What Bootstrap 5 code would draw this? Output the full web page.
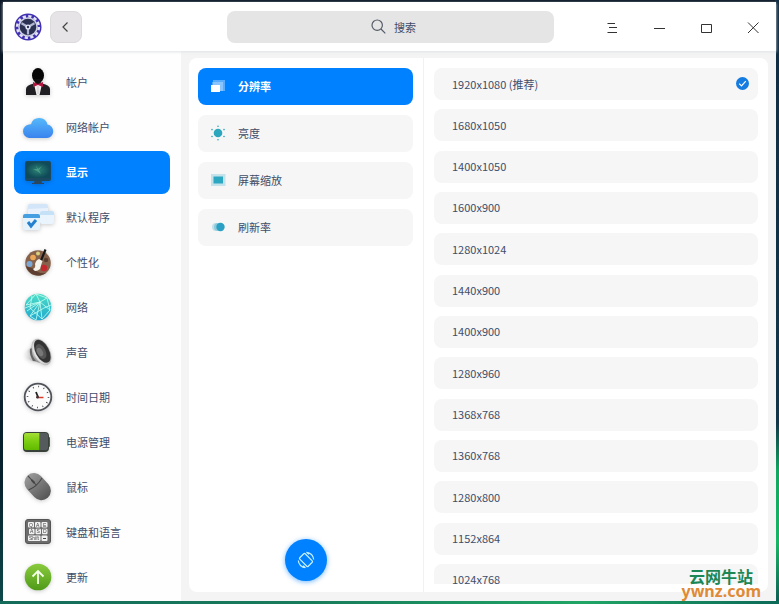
<!DOCTYPE html>
<html lang="zh-CN">
<head>
<meta charset="utf-8">
<meta name="viewport" content="width=device-width, initial-scale=1">
<title>控制中心</title>
<link rel="stylesheet" href="https://cdn.jsdelivr.net/npm/bootstrap@5.3.0/dist/css/bootstrap.min.css">
<style>
body{font-family:"Noto Sans CJK SC",sans-serif;font-size:11px;line-height:16px;color:#414d68;
background:linear-gradient(90deg,#146b5a,#187c5b 40%,#20a565 75%,#0c6a58) bottom/100% 3px no-repeat,
linear-gradient(180deg,#102c42,#12354a 70%,#10a860 78%,#18b565 90%,#0d5a55) right/4px 100% no-repeat,
linear-gradient(180deg,#0a1626,#08222f 80%,#0d4a4c);}
button{font:inherit;color:inherit;border:0;background:none;padding:0}
svg{flex:none;display:block}
.desktop{padding:2px 3px 3px}
.window{background:#f4f4f5}
.titlebar{height:49px;background:#fff;padding:0 11px;box-shadow:0 1px 3px #dfe3e4;position:relative}
.tool{width:32px;height:32px;border-radius:8px;background:#e6e4e6;border:1px solid #dcdadc}
.search{flex:0 1 327px;height:32px;border-radius:8px;background:#e6e5e6;margin-left:145px;padding-left:8px}
.search input{width:24px;border:0;background:none;padding:0;color:#414d68;outline:0}
.search input::placeholder{color:#414d68;opacity:1}
.winctl{gap:31px;margin-left:auto;padding-right:4px}
.side{width:178px;background:#fefefe;padding:10px 11px 2px;gap:2px}
.side button{height:43px;border-radius:8px;padding:0 8px 1px;gap:12px;text-align:left}
.side .active,.menu .active{background:#0081ff;color:#fff;font-weight:700}
.side svg{filter:drop-shadow(0 1px 2px #0003)}
.panel{margin:7px 8px 9px 8px;border-radius:8px;background:#fff}
.middle{width:235px;border-right:1px solid #f1f1f2;padding:10px 10px 11px 9px}
.menu{gap:10px}
.menu button{height:37px;border-radius:8px;background:#f6f6f6;padding:0 12px 1px;gap:12px;text-align:left}
.rotate{width:42px;height:42px;background:#0081ff;box-shadow:0 1px 5px #0081ff90}
.modes{padding:10px 10px 8px;overflow:hidden}
.clip{overflow:hidden;position:relative}
/* the list runs past the lower edge of its viewport */
.modelist{position:absolute;inset:0 0 -12px}
.modelist button{height:32px;border-radius:8px;background:#f6f6f6;padding:0 9px 1px 18px;text-align:left}
.brand{position:absolute;right:18px;bottom:6px;font-weight:700;pointer-events:none}
.brand .cn{font-size:16px;line-height:16px;color:#1c8755;padding-right:8px}
.brand .site{font:700 16px/14px "Noto Sans",sans-serif;color:#e08a35}
</style>
<script src="https://cdn.jsdelivr.net/npm/bootstrap@5.3.0/dist/js/bootstrap.bundle.min.js"></script>
</head>
<body>
<div class="desktop vh-100">
<div class="window h-100 d-flex flex-column">
<header class="titlebar d-flex align-items-center">
  <svg width="28" height="28" viewBox="0 0 28 28"><circle cx="14" cy="14" r="13.5" fill="#4031b0"/><circle cx="14" cy="14" r="10.8" fill="none" stroke="#e3e3f5" stroke-width="2.600" stroke-dasharray="3.2 2.45"/><circle cx="14" cy="14" r="9.8" fill="#cfd0e5"/><circle cx="14" cy="14" r="8.300" fill="#2b3152"/><path d="M14 14V21.500M14 14L7.500 10.200M14 14L20.500 10.200" stroke="#b3b7d6" stroke-width="2.200"/><circle cx="14" cy="14" r="2.600" fill="#e7e9f8"/><circle cx="14" cy="14" r="1.200" fill="#343a60"/></svg>
  <button class="tool ms-2 d-flex align-items-center justify-content-center" aria-label="返回"><svg width="12" height="12" viewBox="0 0 12 12" fill="none" stroke="#444" stroke-width="1.200"><path d="M7.500 1.500L3 6L7.500 10.500"/></svg></button>
  <label class="search d-flex align-items-center justify-content-center gap-2"><svg width="15" height="15" viewBox="0 0 15 15" fill="none" stroke="#555c68" stroke-width="1.200"><circle cx="6.200" cy="6.200" r="5.200"/><path d="M10 10L14.300 14.300"/></svg><input type="text" placeholder="搜索" aria-label="搜索"></label>
  <div class="winctl d-flex">
    <button aria-label="菜单"><svg width="16" height="16" viewBox="0 0 16 16" stroke="#333"><path d="M3.500 4.500H11M5 8.500H13M3.500 13.500H13"/></svg></button>
    <button aria-label="最小化"><svg width="16" height="16" viewBox="0 0 16 16" stroke="#333"><path d="M3 9.500H14"/></svg></button>
    <button aria-label="最大化"><svg width="16" height="16" viewBox="0 0 16 16" stroke="#333" fill="none"><path d="M3.500 5.500H13.500V13.500H3.500Z"/></svg></button>
    <button aria-label="关闭"><svg width="16" height="16" viewBox="0 0 16 16" stroke="#333"><path d="M3 3.500L13.500 14M13.500 3.500L3 14"/></svg></button>
  </div>
</header>
<div class="d-flex flex-grow-1">
<nav class="side d-flex flex-column flex-shrink-0">
  <button class="d-flex align-items-center"><svg width="32" height="32" viewBox="0 0 32 32"><path d="M4 29V23Q4 19 12 17.500H20Q28 19 28 23V29Z" fill="#202024"/><path d="M12 18L14.500 29H17.500L20 18Z" fill="#f4eef0"/><path d="M15 20H17L17.500 28H14.500Z" fill="#ddd"/><ellipse cx="16" cy="9.500" rx="6" ry="7.500" fill="#070707"/><path d="M12 13H20L18 18.500H14Z" fill="#111"/><path d="M11 16L16 18L21 16V21L16 19L11 21Z" fill="#b01640"/></svg>帐户</button>
  <button class="d-flex align-items-center"><svg width="32" height="32" viewBox="0 0 32 32"><defs><linearGradient id="cl" x2="0" y2="1"><stop stop-color="#55b9fb"/><stop offset="1" stop-color="#3a83ee"/></linearGradient></defs><path d="M7 27A6.800 6.800 0 0 1 7 13.500Q8 13 9 13.200A8.500 8.500 0 0 1 25.500 13.500A6.800 6.800 0 0 1 25 27Z" fill="url(#cl)"/></svg>网络帐户</button>
  <button class="active d-flex align-items-center"><svg width="32" height="32" viewBox="0 0 32 32"><defs><radialGradient id="mo"><stop stop-color="#2d8377"/><stop offset="1" stop-color="#0f4a58"/></radialGradient></defs><path d="M13 24H19L20 27H12Z" fill="#28495c"/><path d="M10 27H22V28H10Z" fill="#2c4460"/><rect x="3" y="5" width="26" height="20" rx="2" fill="#1c4960"/><rect x="4" y="6" width="24" height="16" fill="url(#mo)"/><path d="M14 9L16 13L20 10L17 14L19 18L15 15L11 13L15 13Z" fill="#55a889" opacity=".7"/></svg>显示</button>
  <button class="d-flex align-items-center"><svg width="32" height="32" viewBox="0 0 32 32"><rect x="6" y="3" width="20" height="14" rx="2" fill="#e9f2fc"/><path d="M6 8V5Q6 3 8 3H24Q26 3 26 5V7Z" fill="#d3e5f9"/><rect x="18" y="10" width="14" height="13" rx="2" fill="#e9f4fd"/><path d="M18 14V12Q18 10 20 10H30Q32 10 32 12V14Z" fill="#c5e1f8"/><rect x="1" y="13" width="17" height="16" rx="2" fill="#e6f3fd"/><path d="M1 17V15Q1 13 3 13H16Q18 13 18 15V17Z" fill="#469fe0"/><path d="M6 21L9 25L14 19" fill="none" stroke="#2580ce" stroke-width="3"/></svg>默认程序</button>
  <button class="d-flex align-items-center"><svg width="32" height="32" viewBox="0 0 32 32"><circle cx="16" cy="17" r="12.800" fill="#86624c"/><path d="M4 20A12.800 12.800 0 0 0 24 27Q16 28 12 23Z" fill="#5d3e31"/><circle cx="7.500" cy="18" r="3" fill="#7ca8d8"/><circle cx="11" cy="11.500" r="2.800" fill="#eba957"/><circle cx="16" cy="7.500" r="2" fill="#d6d07d"/><circle cx="22" cy="22" r="3.200" fill="#c3272e"/><circle cx="24" cy="14" r="2.200" fill="#5a3c2e"/><path d="M18 14L22.500 3L24.500 4L20 15Z" fill="#171717"/><path d="M17 13L20.500 15Q19 19 18 23Q13 27 11 23Q14 22 13 18Q14 14 17 13Z" fill="#f5f3ed"/></svg>个性化</button>
  <button class="d-flex align-items-center"><svg width="32" height="32" viewBox="0 0 32 32"><defs><linearGradient id="nt" x2="0" y2="1"><stop stop-color="#4dddc6"/><stop offset="1" stop-color="#21a9cf"/></linearGradient></defs><circle cx="16" cy="16" r="13.300" fill="url(#nt)"/><g fill="none" stroke="#c8fff3" stroke-width=".8"><path d="M14 3L18 11L4 14L14 3L25 7L18 11L28 19M8 25L18 11L20 28L28 19L25 7M18 11L14 29L8 25L22 17L29 14M5 20L18 11L3 17M10 5L8 17L20 28"/></g></svg>网络</button>
  <button class="d-flex align-items-center"><svg width="32" height="32" viewBox="0 0 32 32"><defs><linearGradient id="sp"><stop stop-color="#eee"/><stop offset="1" stop-color="#777"/></linearGradient><linearGradient id="rim"><stop stop-color="#e8e8e8"/><stop offset="1" stop-color="#9a9a9a"/></linearGradient></defs><path d="M5 15Q3 18 5 22L10 25L19 27L13 7Z" fill="url(#sp)"/><path d="M8 13Q7 18 11 25L14 25Q9 19 10 12Z" fill="#666"/><ellipse cx="19.500" cy="16" rx="8" ry="14" transform="rotate(-28 19.500 16)" fill="url(#rim)" stroke="#b5b5b5" stroke-width=".6"/><ellipse cx="20.300" cy="15.300" rx="6.600" ry="12.500" transform="rotate(-28 20.300 15.300)" fill="#333"/><ellipse cx="19" cy="15.500" rx="4.500" ry="8" transform="rotate(-28 19 15.500)" fill="#555"/><ellipse cx="18" cy="16" rx="2.700" ry="4.500" transform="rotate(-28 18 16)" fill="#777"/></svg>声音</button>
  <button class="d-flex align-items-center"><svg width="32" height="32" viewBox="0 0 32 32"><circle cx="16" cy="16" r="13.300" fill="#fbfbfb" stroke="#50535a" stroke-width="1.800"/><circle cx="16" cy="16" r="10.500" fill="none" stroke="#333" stroke-width="1.600" stroke-dasharray=".8 4.698"/><path d="M16 16L14 11" stroke="#222" stroke-width="1.800"/><path d="M15 16.500H21.500" stroke="#da3b2d" stroke-width="1.500"/><circle cx="15.500" cy="16.200" r="1.400" fill="#493030"/></svg>时间日期</button>
  <button class="d-flex align-items-center"><svg width="32" height="32" viewBox="0 0 32 32"><defs><linearGradient id="bt" x2="0" y2="1"><stop stop-color="#a5df36"/><stop offset=".5" stop-color="#7bcd10"/><stop offset="1" stop-color="#61ba00"/></linearGradient></defs><rect x="25" y="11" width="3" height="10" rx="1" fill="#555"/><rect x="1" y="6" width="26" height="20" rx="4" fill="#39423a"/><path d="M4 7H17.500V24H4Q2 24 2 22V9Q2 7 4 7Z" fill="url(#bt)"/><path d="M18 7H24Q26 7 26 9V22Q26 24 24 24H18Z" fill="#555a5c"/></svg>电源管理</button>
  <button class="d-flex align-items-center"><svg width="32" height="32" viewBox="0 0 32 32"><defs><linearGradient id="ms" x2="0" y2="1"><stop stop-color="#999"/><stop offset="1" stop-color="#555"/></linearGradient></defs><g transform="rotate(-42 16 16)"><rect x="6.500" y=".5" width="19" height="30" rx="9.500" fill="url(#ms)"/><path d="M7 12Q16 15 25 12M16 1V13" fill="none" stroke="#454545"/><rect x="15" y="6" width="2" height="5" rx="1" fill="#444"/></g></svg>鼠标</button>
  <button class="d-flex align-items-center"><svg width="32" height="32" viewBox="0 0 32 32"><rect x="3.500" y="3.500" width="25" height="24" rx="2.500" fill="#6c6c6c" stroke="#555"/><g fill="#f1f1f1"><rect x="6" y="6" width="6" height="5.500" rx="1"/><rect x="13" y="6" width="5.500" height="5.500" rx="1"/><rect x="19.500" y="6" width="6" height="5.500" rx="1"/><rect x="7" y="12.800" width="5.500" height="5.500" rx="1"/><rect x="13.500" y="12.800" width="5.500" height="5.500" rx="1"/><rect x="20" y="12.800" width="5.500" height="5.500" rx="1"/><rect x="6" y="19.500" width="12.500" height="5.500" rx="1"/><rect x="19.500" y="19.500" width="6" height="5.500" rx="1"/></g><g font-family="Liberation Sans,sans-serif" font-size="5" fill="#444"><text x="7" y="10.500">Q</text><text x="14" y="10.500">A</text><text x="21" y="10.500">E</text><text x="8" y="17.400">A</text><text x="14.500" y="17.400">S</text><text x="21" y="17.400">D</text><text x="7" y="24">Shift</text></g><path d="M21 22.500H24" stroke="#444"/></svg>键盘和语言</button>
  <button class="d-flex align-items-center"><svg width="32" height="32" viewBox="0 0 32 32"><defs><linearGradient id="up" x2="0" y2="1"><stop stop-color="#8acb3e"/><stop offset="1" stop-color="#4f9a18"/></linearGradient></defs><circle cx="16" cy="16" r="13.300" fill="url(#up)"/><path d="M16 23V10M10.500 15.500L16 10L21.500 15.500" fill="none" stroke="#f4ffe9" stroke-width="1.800"/></svg>更新</button>
</nav>
<main class="panel d-flex flex-grow-1">
  <section class="middle d-flex flex-column flex-shrink-0">
    <div class="menu d-flex flex-column">
      <button class="active d-flex align-items-center"><svg width="16" height="16" viewBox="0 0 16 16" fill="#fff"><path d="M3 2H15V13H3Z" opacity=".35"/><path d="M2 4H13V13H2Z" opacity=".3"/><path d="M1 7H10V14H1Z"/></svg>分辨率</button>
      <button class="d-flex align-items-center"><svg width="16" height="16" viewBox="0 0 16 16" fill="#2ca7bd"><circle cx="8" cy="8" r="4.300"/><circle cx="8" cy="1.200" r=".8"/><circle cx="8" cy="14.800" r=".8"/><circle cx="2" cy="4.600" r=".8"/><circle cx="14" cy="4.600" r=".8"/><circle cx="2" cy="11.500" r=".8"/><circle cx="14" cy="11.500" r=".8"/></svg>亮度</button>
      <button class="d-flex align-items-center"><svg width="16" height="16" viewBox="0 0 16 16" fill="#2ca7c2"><path d="M1 2H15.500V14H1Z" opacity=".25"/><path d="M3.500 4.500H13V11.500H3.500Z"/></svg>屏幕缩放</button>
      <button class="d-flex align-items-center"><svg width="16" height="16" viewBox="0 0 16 16" fill="#2ca0c4"><circle cx="6" cy="8" r="4" opacity=".25"/><circle cx="8" cy="8" r="4" opacity=".35"/><circle cx="10.500" cy="8" r="4.200"/></svg>刷新率</button>
    </div>
    <button class="rotate rounded-circle mt-auto mx-auto d-flex align-items-center justify-content-center" aria-label="旋转屏幕"><svg width="18" height="18" viewBox="0 0 18 18" fill="none" stroke="#c9f2ff" stroke-width="1.200"><rect x="5.200" y="3" width="7.600" height="12" rx="1" transform="rotate(-45 9 9)"/><path d="M9.500 1.300A7.700 7.700 0 0 1 16.700 8.500M8.500 16.700A7.700 7.700 0 0 1 1.300 9.500M9.500 1.300L12 3.400M8.500 16.700L6 14.600"/></svg></button>
  </section>
  <section class="modes flex-grow-1 d-flex">
    <div class="clip flex-grow-1">
    <div class="modelist d-flex flex-column justify-content-between">
      <button class="d-flex align-items-center justify-content-between">1920x1080 (推荐)<svg width="13" height="13" viewBox="0 0 13 13"><circle cx="6.500" cy="6.500" r="6.500" fill="#147be0"/><path d="M3.200 6.700L5.500 9L9.800 4.200" fill="none" stroke="#fff" stroke-width="1.200"/></svg></button>
      <button>1680x1050</button>
      <button>1400x1050</button>
      <button>1600x900</button>
      <button>1280x1024</button>
      <button>1440x900</button>
      <button>1400x900</button>
      <button>1280x960</button>
      <button>1368x768</button>
      <button>1360x768</button>
      <button>1280x800</button>
      <button>1152x864</button>
      <button>1024x768</button>
    </div>
    </div>
  </section>
</main>
</div>
</div>
</div>
<div class="brand text-end"><div class="cn">云网牛站</div><div class="site">ywnz.com</div></div>
</body>
</html>
